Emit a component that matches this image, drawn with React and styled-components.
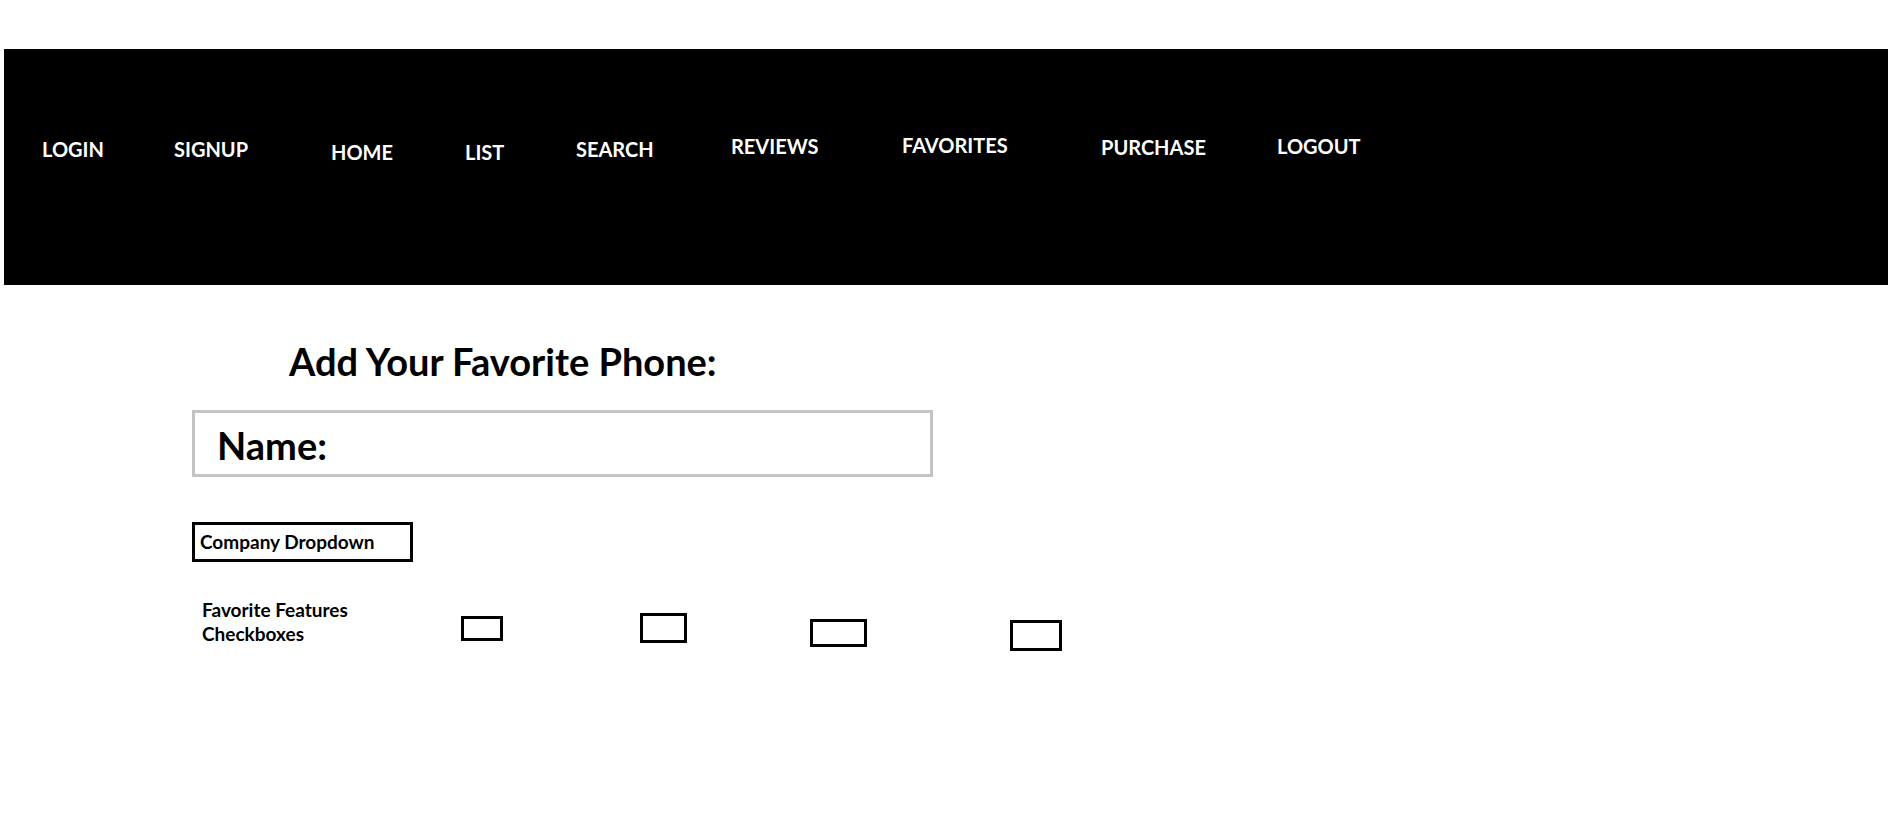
import React from "react";
import styled, { createGlobalStyle } from "styled-components";

const GlobalStyle = createGlobalStyle`
	body {
		margin: 0;
		background: #ffffff;
		font-family: Lato, "Open Sans", sans-serif;
		color: #000000;
	}
`;

const Page = styled.div`
	width: 1904px;
	padding-top: 49px;
	padding-bottom: 160px;
`;

const NavBar = styled.nav`
	display: flex;
	align-items: flex-start;
	margin-left: 4px;
	width: 1884px;
	height: 236px;
	box-sizing: border-box;
	padding: 88px 0 0 38px;
	background-color: #000000;
`;

const NavLink = styled.a`
	display: block;
	width: ${(p) => (p.$width ? p.$width + "px" : "auto")};
	margin-top: ${(p) => p.$dy || 0}px;
	flex-shrink: 0;
	color: #ffffff;
	font-size: 20px;
	font-weight: 700;
	line-height: 24px;
	text-decoration: none;
	cursor: pointer;
`;

const Main = styled.main`
	display: flex;
	flex-direction: column;
	align-items: flex-start;
	padding-left: 192px;
`;

const Title = styled.h1`
	margin: 54px 0 0 97px;
	font-size: 38px;
	font-weight: 700;
	line-height: 44px;
`;

const NameBox = styled.label`
	display: flex;
	align-items: center;
	margin-top: 27px;
	width: 741px;
	height: 67px;
	box-sizing: border-box;
	padding: 2px 0 0 22px;
	border: 3px solid #c3c3c3;
	font-size: 38px;
	font-weight: 700;
`;

const Dropdown = styled.div`
	display: flex;
	align-items: center;
	margin-top: 45px;
	width: 221px;
	height: 40px;
	box-sizing: border-box;
	padding: 0 0 1px 5px;
	border: 3px solid #000000;
	font-size: 19px;
	font-weight: 700;
	cursor: pointer;
`;

const FeatureRow = styled.div`
	display: flex;
	align-items: flex-start;
	margin-top: 36px;
`;

const FeatureLabel = styled.div`
	width: 259px;
	margin-left: 10px;
	font-size: 19px;
	font-weight: 700;
	line-height: 24px;
`;

const Checkbox = styled.span`
	display: block;
	flex-shrink: 0;
	width: ${(p) => p.$w}px;
	height: ${(p) => p.$h}px;
	margin-left: ${(p) => p.$ml || 0}px;
	margin-top: ${(p) => p.$mt}px;
	box-sizing: border-box;
	border: 3px solid #000000;
	cursor: pointer;
`;

const links = [
	{ label: "LOGIN", width: 132, dy: 0 },
	{ label: "SIGNUP", width: 157, dy: 0 },
	{ label: "HOME", width: 134, dy: 3 },
	{ label: "LIST", width: 111, dy: 3 },
	{ label: "SEARCH", width: 155, dy: 0 },
	{ label: "REVIEWS", width: 171, dy: -3 },
	{ label: "FAVORITES", width: 199, dy: -4 },
	{ label: "PURCHASE", width: 176, dy: -2 },
	{ label: "LOGOUT", dy: -3 },
];

const boxes = [
	{ w: 42, h: 25, ml: 0, mt: 18 },
	{ w: 47, h: 30, ml: 137, mt: 15 },
	{ w: 57, h: 28, ml: 123, mt: 21 },
	{ w: 52, h: 31, ml: 143, mt: 22 },
];

export default function App() {
	return (
		<Page>
			<GlobalStyle />
			<NavBar>
				{links.map((l) => (
					<NavLink key={l.label} $width={l.width} $dy={l.dy}>
						{l.label}
					</NavLink>
				))}
			</NavBar>
			<Main>
				<Title>Add Your Favorite Phone:</Title>
				<NameBox>Name:</NameBox>
				<Dropdown>Company Dropdown</Dropdown>
				<FeatureRow>
					<FeatureLabel>
						Favorite Features
						<br />
						Checkboxes
					</FeatureLabel>
					{boxes.map((b, i) => (
						<Checkbox key={i} $w={b.w} $h={b.h} $ml={b.ml} $mt={b.mt} />
					))}
				</FeatureRow>
			</Main>
		</Page>
	);
}
